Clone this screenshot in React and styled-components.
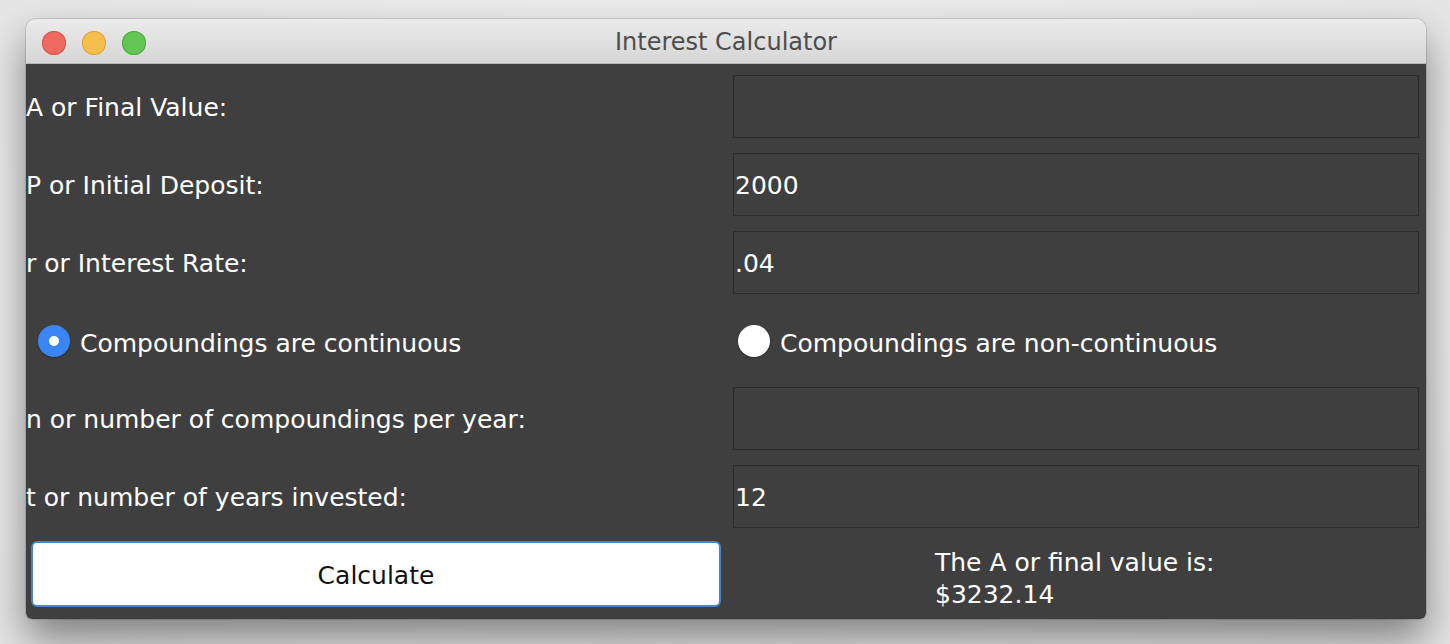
import React, { useState } from "react";
import styled, { createGlobalStyle } from "styled-components";

const GlobalStyle = createGlobalStyle`
  html, body {
    margin: 0;
    padding: 0;
    background: #ececec;
    font-family: "DejaVu Sans", "Liberation Sans", sans-serif;
  }
`;

const Page = styled.div`
  width: 1450px;
  height: 644px;
  padding: 19px 0 0 26px;
  box-sizing: border-box;
  background: radial-gradient(ellipse at 50% 45%, #f4f4f4 0%, #ececec 60%, #e4e4e4 100%);
  overflow: hidden;
`;

const Window = styled.div`
  width: 1400px;
  border-radius: 10px 10px 6px 6px;
  overflow: hidden;
  box-shadow: 0 0 0 1px rgba(0, 0, 0, 0.12), 0 20px 40px rgba(0, 0, 0, 0.45);
`;

const TitleBar = styled.div`
  height: 45px;
  position: relative;
  display: flex;
  align-items: center;
  justify-content: center;
  background: linear-gradient(#ebebeb, #d6d6d6);
  border-bottom: 1px solid #b9b9b9;
  color: #4d4d4d;
  font-size: 24px;
  padding-top: 2px;
  box-sizing: border-box;
`;

const Lights = styled.div`
  position: absolute;
  left: 16px;
  top: 12px;
  display: flex;
  gap: 16px;
`;

const Light = styled.span`
  width: 24px;
  height: 24px;
  border-radius: 50%;
  background: ${(p) => p.$color};
  box-shadow: inset 0 0 0 1px ${(p) => p.$edge};
`;

const Body = styled.div`
  background: #3f3f3f;
  display: grid;
  grid-template-columns: 707px 686px;
  grid-template-rows: repeat(6, 63px) 64px;
  row-gap: 15px;
  padding: 11px 7px 12px 0;
  color: #ffffff;
  font-size: 25px;
`;

const Label = styled.div`
  display: flex;
  align-items: center;
  padding-top: 2px;
  white-space: nowrap;
`;

const Field = styled.input`
  box-sizing: border-box;
  width: 100%;
  height: 63px;
  margin: 0;
  background: #3f3f3f;
  border: 1px solid #2c2c2c;
  color: #ffffff;
  font: inherit;
  padding: 2px 0 0 1px;
  outline: none;
`;

const RadioRow = styled.label`
  display: flex;
  align-items: center;
  gap: 10px;
  padding-left: ${(p) => p.$indent}px;
  cursor: pointer;
`;

const RadioDot = styled.span`
  width: 32px;
  height: 32px;
  border-radius: 50%;
  display: flex;
  align-items: center;
  justify-content: center;
  background: ${(p) => (p.$on ? "#3a86f6" : "#ffffff")};
  box-shadow: 0 1px 2px rgba(0, 0, 0, 0.3);
  &::after {
    content: "";
    width: 10px;
    height: 10px;
    border-radius: 50%;
    background: #ffffff;
    display: ${(p) => (p.$on ? "block" : "none")};
  }
`;

const RadioText = styled.span`
  padding-top: 6px;
`;

const ButtonCell = styled.div`
  display: flex;
  align-items: stretch;
  padding: 0 12px 0 5px;
  margin-top: -2px;
  height: 66px;
`;

const CalcButton = styled.button`
  flex: 1;
  background: #ffffff;
  border: 2px solid #4b83c6;
  border-radius: 6px;
  color: #111;
  font: inherit;
  padding: 2px 0 0;
  cursor: pointer;
`;

const Result = styled.div`
  display: flex;
  justify-content: center;
  align-items: flex-start;
  margin-top: -2px;
  padding-top: 6px;
  line-height: 32px;
`;

const ResultText = styled.div`
  width: 282px;
  white-space: nowrap;
`;

export default function App() {
  const [continuous, setContinuous] = useState(true);

  return (
    <Page>
      <GlobalStyle />
      <Window>
        <TitleBar>
          <Lights>
            <Light $color="#ee6a5e" $edge="#d5574c" />
            <Light $color="#f5bf4f" $edge="#d9a33c" />
            <Light $color="#62c554" $edge="#50a943" />
          </Lights>
          Interest Calculator
        </TitleBar>
        <Body>
          <Label>A or Final Value:</Label>
          <Field defaultValue="" />
          <Label>P or Initial Deposit:</Label>
          <Field defaultValue="2000" />
          <Label>r or Interest Rate:</Label>
          <Field defaultValue=".04" />
          <RadioRow $indent={12} onClick={() => setContinuous(true)}>
            <RadioDot $on={continuous} />
            <RadioText>Compoundings are continuous</RadioText>
          </RadioRow>
          <RadioRow $indent={5} onClick={() => setContinuous(false)}>
            <RadioDot $on={!continuous} />
            <RadioText>Compoundings are non-continuous</RadioText>
          </RadioRow>
          <Label>n or number of compoundings per year:</Label>
          <Field defaultValue="" />
          <Label>t or number of years invested:</Label>
          <Field defaultValue="12" />
          <ButtonCell>
            <CalcButton>Calculate</CalcButton>
          </ButtonCell>
          <Result>
            <ResultText>
              The A or final value is:
              <br />
              $3232.14
            </ResultText>
          </Result>
        </Body>
      </Window>
    </Page>
  );
}
